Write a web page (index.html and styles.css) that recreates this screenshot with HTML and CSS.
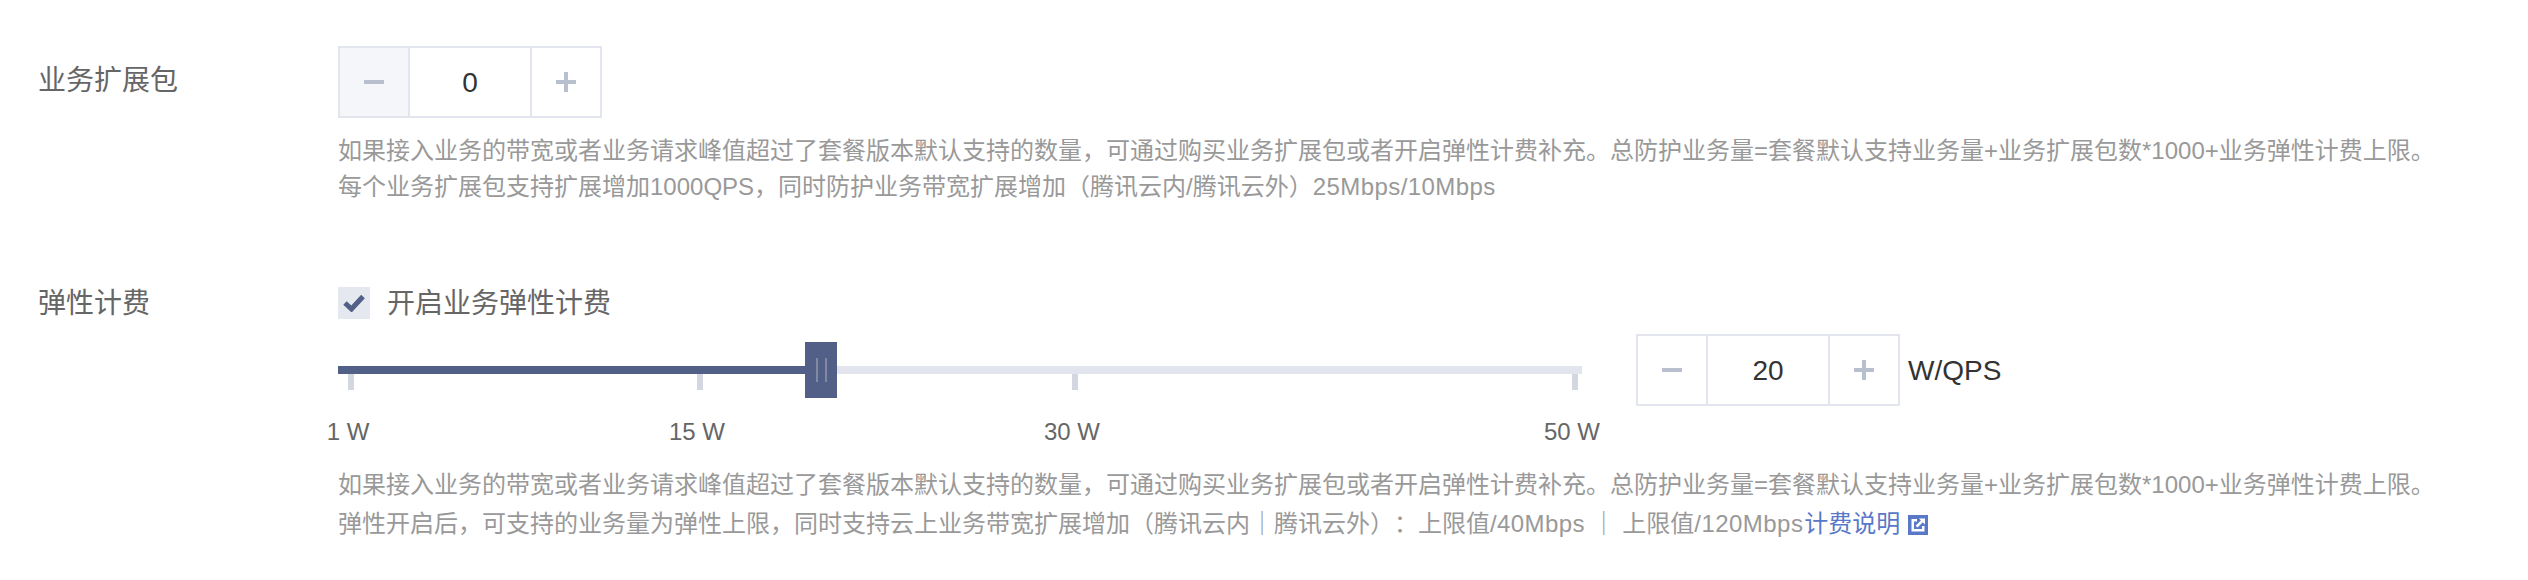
FILE: index.html
```html
<!DOCTYPE html>
<html lang="zh-CN">
<head>
<meta charset="utf-8">
<title>业务扩展包</title>
<link rel="stylesheet" href="styles.css">
</head>
<body>
<main class="form">
  <section class="row row-pack">
    <div class="label">业务扩展包</div>
    <div class="control">
      <div class="stepper">
        <button class="step step-disabled"><span class="minus"></span></button>
        <div class="value">0</div>
        <button class="step"><span class="plus"></span></button>
      </div>
      <div class="help help-pack">
        <p>如果接入业务的带宽或者业务请求峰值超过了套餐版本默认支持的数量，可通过购买业务扩展包或者开启弹性计费补充。总防护业务量=套餐默认支持业务量+业务扩展包数*1000+业务弹性计费上限。</p>
        <p>每个业务扩展包支持扩展增加1000QPS，同时防护业务带宽扩展增加（腾讯云内/腾讯云外）<span class="wide">25Mbps/10Mbps</span></p>
      </div>
    </div>
  </section>
  <section class="row row-elastic">
    <div class="label">弹性计费</div>
    <div class="control">
      <label class="check">
        <span class="box"><svg width="22" height="18" viewBox="0 0 22 18"><path d="M2 9 L8.5 15 L20 2.5" fill="none" stroke="#525f86" stroke-width="5"/></svg></span>
        <span class="check-text">开启业务弹性计费</span>
      </label>
      <div class="slider-row">
        <div class="slider">
          <div class="track"><div class="fill"></div></div>
          <span class="tick t1"></span>
          <span class="tick t2"></span>
          <span class="tick t3"></span>
          <span class="tick t4"></span>
          <div class="handle"><i></i><i></i></div>
          <span class="mark t1">1 W</span>
          <span class="mark t2">15 W</span>
          <span class="mark t3">30 W</span>
          <span class="mark t4">50 W</span>
        </div>
        <div class="stepper">
          <button class="step"><span class="minus"></span></button>
          <div class="value">20</div>
          <button class="step"><span class="plus"></span></button>
        </div>
        <span class="unit">W/QPS</span>
      </div>
      <div class="help help-elastic">
        <p>如果接入业务的带宽或者业务请求峰值超过了套餐版本默认支持的数量，可通过购买业务扩展包或者开启弹性计费补充。总防护业务量=套餐默认支持业务量+业务扩展包数*1000+业务弹性计费上限。</p>
        <p>弹性开启后，可支持的业务量为弹性上限，同时支持云上业务带宽扩展增加（腾讯云内｜腾讯云外）：上限值<span class="wide">/40Mbps</span> ｜ 上限值<span class="wide-s">/120Mbps</span><a class="link" href="#">计费说明<svg class="ext" width="20" height="20" viewBox="0 0 20 20"><rect width="20" height="20" fill="#5a78c8"/><path fill="#fff" d="M3.5 4H9V6.5H6V14H14V11H16.5V16.5H3.5Z"/><path fill="#fff" d="M11 3.5H17V9.5L14.8 7.3L9.5 12.6L7.6 10.7L12.9 5.4Z"/></svg></a></p>
      </div>
    </div>
  </section>
</main>
</body>
</html>
```
FILE: styles.css
```css
* { box-sizing: border-box; }
html, body { margin: 0; background: #fff; }
body {
  font-family: "Liberation Sans", "Noto Sans CJK SC", sans-serif;
  color: #666;
  text-spacing-trim: space-all;
}
.form { padding: 46px 0 0 38px; width: 2528px; height: 580px; overflow: hidden; }
.row { display: flex; }
.label { width: 300px; flex: none; font-size: 28px; line-height: 40px; color: #666; padding-top: 15px; }
.row-elastic { margin-top: 81px; }
.row-elastic .label { padding-top: 0; margin-top: -2px; }
.stepper { display: flex; width: 264px; height: 72px; flex: none; }
.step {
  width: 72px; height: 72px; padding: 0; flex: none;
  display: flex; align-items: center; justify-content: center;
  background: #fff; border: 2px solid #e2e5ed;
}
.step-disabled { background: #f5f6fa; }
.minus { display: block; width: 20px; height: 4px; background: #b8bfce; }
.plus { display: block; width: 20px; height: 20px; background: linear-gradient(#b8bfce, #b8bfce) center / 20px 4px no-repeat, linear-gradient(#b8bfce, #b8bfce) center / 4px 20px no-repeat; }
.value {
  flex: 1; text-align: center; font-size: 28px; line-height: 70px; color: #333;
  border-top: 2px solid #e2e5ed; border-bottom: 2px solid #e2e5ed;
}
.help { font-size: 24px; color: #999; white-space: nowrap; }
.help p { margin: 0; }
.help-pack { margin-top: 15px; line-height: 36px; }
.help-elastic { margin-top: 3px; line-height: 39px; }
.wide { letter-spacing: .42px; }
.wide-s { letter-spacing: .45px; }
.check { display: flex; align-items: center; font-size: 28px; line-height: 32px; color: #666; }
.check-text { padding-top: 2px; }
.box { width: 32px; height: 32px; background: #e6e8ef; display: flex; align-items: center; justify-content: center; margin-right: 17px; }
.box svg { display: block; }
.slider-row { display: flex; align-items: flex-start; margin-top: 22px; }
.slider { position: relative; width: 1244px; height: 120px; margin-right: 54px; }
.track { position: absolute; left: 0; right: 0; top: 24px; height: 8px; background: #e2e5ed; }
.fill { width: 470px; height: 8px; background: #525f86; }
.tick { position: absolute; top: 32px; width: 6px; height: 16px; background: #d2d7e0; transform: translateX(-3px); }
.handle {
  position: absolute; left: 467px; top: 0; width: 32px; height: 56px; background: #525f86;
  display: flex; justify-content: center; gap: 7px; padding-top: 16px;
}
.handle i { display: block; width: 2px; height: 24px; background: #8189a5; }
.mark { position: absolute; top: 76px; font-size: 24px; line-height: 28px; color: #666; transform: translateX(calc(-50% - 3px)); white-space: nowrap; }
.t1 { left: 13px; }
.t2 { left: 362px; }
.t3 { left: 737px; }
.t4 { left: 1237px; }
.slider-row .stepper { margin-top: -8px; }
.unit { font-size: 28px; line-height: 34px; color: #333; margin: 12px 0 0 8px; }
.link { color: #5a78c8; text-decoration: none; margin-left: 1px; }
.ext { display: inline-block; vertical-align: -3px; margin-left: 8px; }
```
